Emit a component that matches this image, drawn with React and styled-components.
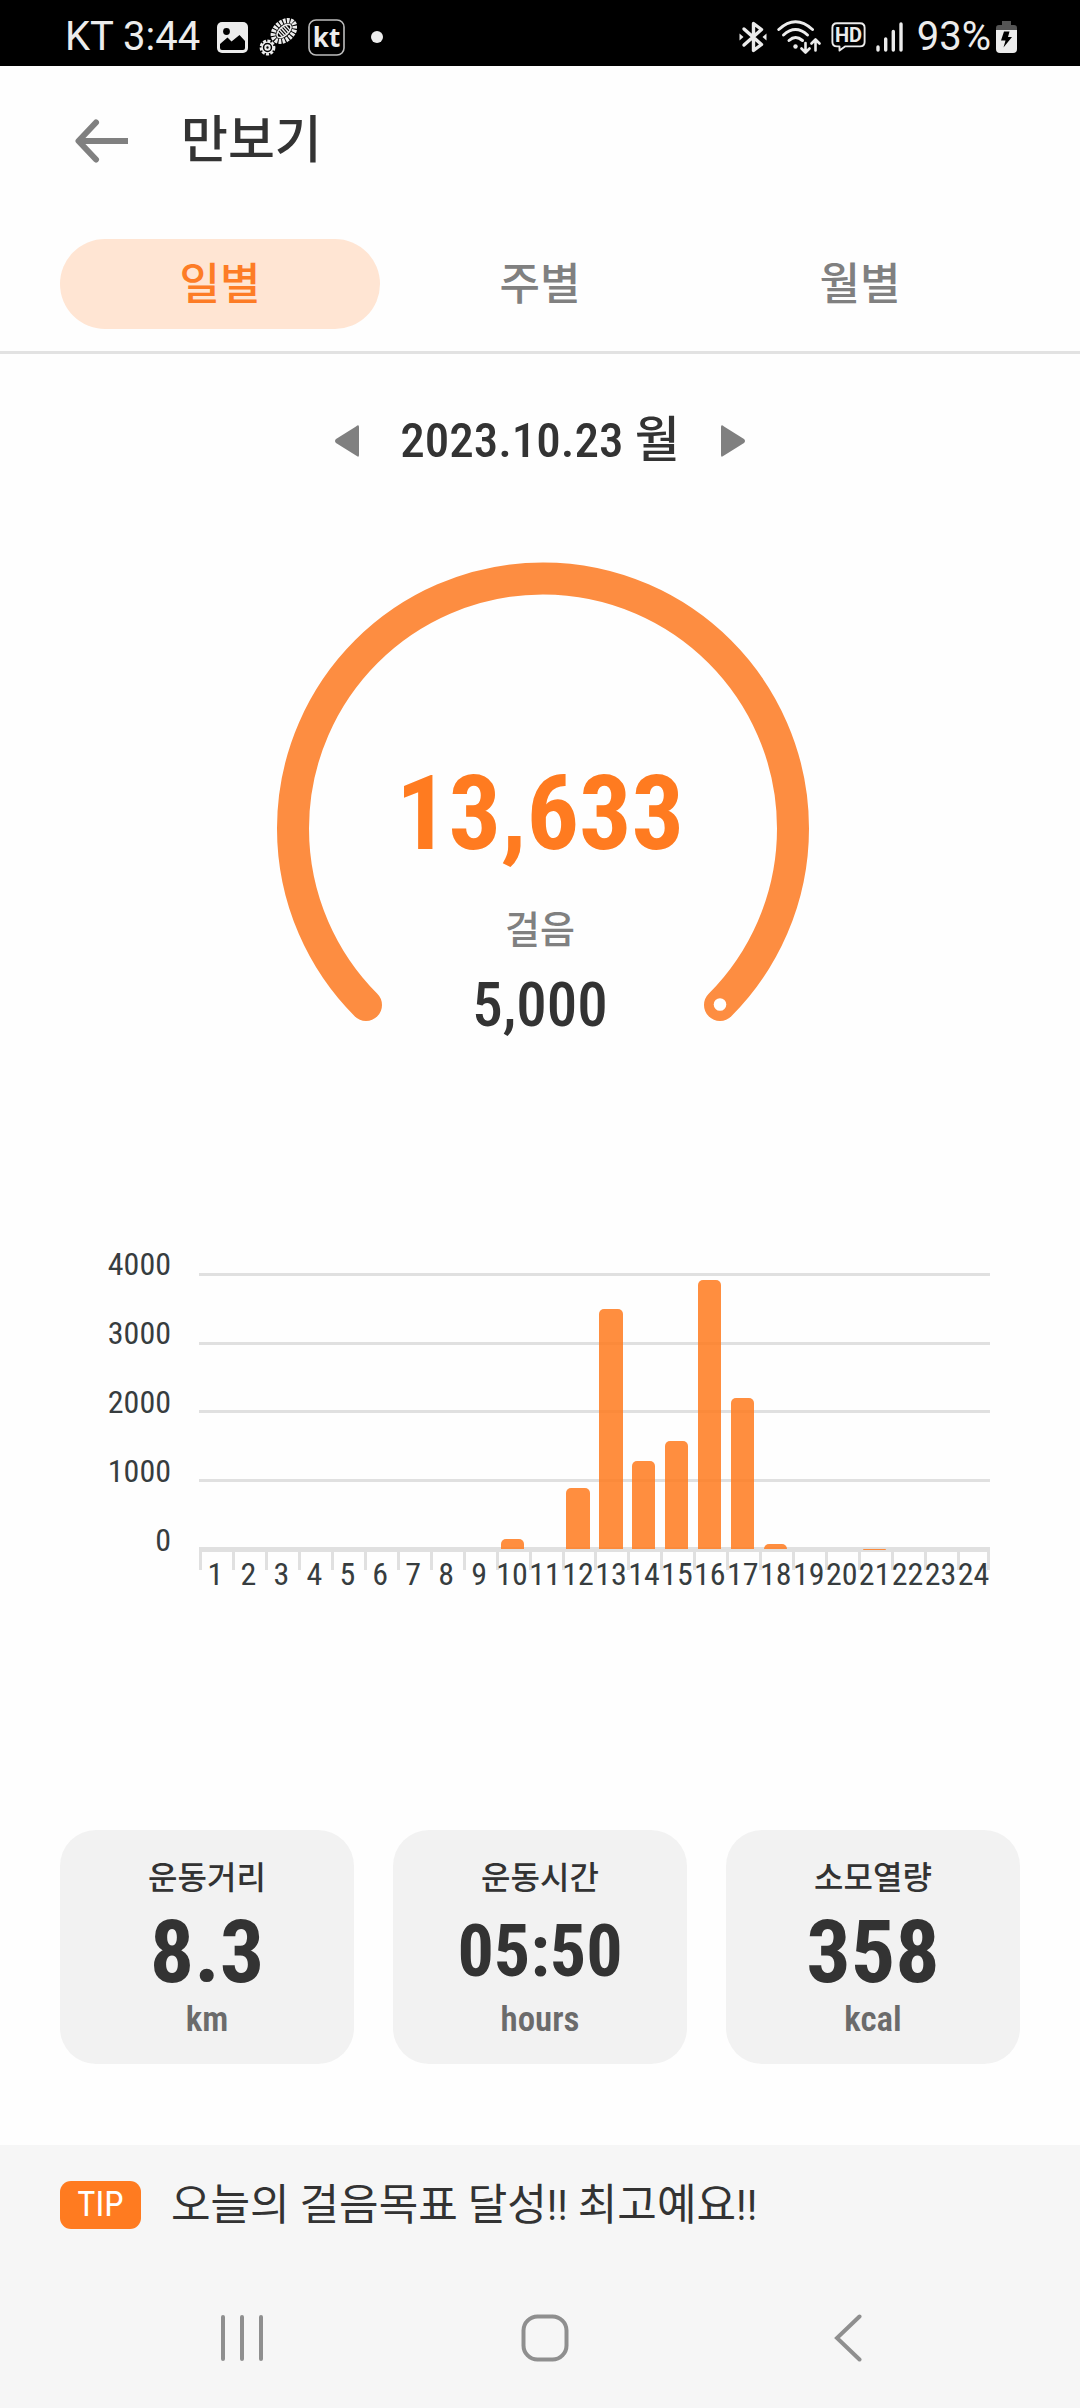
import React, { useState } from "react";
import styled, { createGlobalStyle } from "styled-components";

const tabs = ["일별", "주별", "월별"];

const maxSteps = 4000;
const scale = [4000, 3000, 2000, 1000, 0];
const hourly = [
  0, 0, 0, 0, 0, 0, 0, 0, 0, 151, 0, 893, 3508, 1286, 1573, 3934, 2205, 76, 0,
  0, 7, 0, 0, 0,
];

const stats = [
  { label: "운동거리", value: "8.3", unit: "km" },
  { label: "운동시간", value: "05:50", unit: "hours", small: true },
  { label: "소모열량", value: "358", unit: "kcal" },
];

const GlobalStyle = createGlobalStyle`
  * {
    box-sizing: border-box;
  }
  body {
    margin: 0;
    background: #fefefe;
    color: #333;
    font-family: "Roboto Condensed", "Noto Sans CJK KR", sans-serif;
  }
  h1, p, dl, dt, dd {
    margin: 0;
  }
  button {
    border: 0;
    padding: 0;
    background: none;
    font: inherit;
    color: inherit;
    cursor: pointer;
  }
  svg {
    display: block;
  }
`;

const Page = styled.div`
  min-height: 100vh;
  display: flex;
  flex-direction: column;
`;

const StatusBar = styled.div`
  height: 66px;
  padding: 8px 63px 0 65px;
  display: flex;
  justify-content: space-between;
  background: #000;
  color: #ececec;
  font-family: Roboto, sans-serif;
  font-size: 40px;
  line-height: 58px;
`;

const StatusGroup = styled.div`
  display: flex;
  align-items: center;
  gap: ${(props) => props.$gap};
`;

const Header = styled.header`
  height: 150px;
  padding: 0 75px;
  display: flex;
  align-items: center;
  gap: 52px;
  h1 {
    font-size: 51px;
    font-weight: 500;
    line-height: 60px;
  }
`;

const TabBar = styled.nav`
  display: flex;
  padding: 23px 60px 22px;
  border-bottom: 3px solid #e2e2e2;
`;

const Tab = styled.button`
  flex: 1;
  height: 90px;
  border-radius: 45px;
  font-size: 44px;
  font-weight: 500;
  line-height: 92px;
  background: ${(props) => (props.$active ? "#ffe5d3" : "transparent")};
  color: ${(props) => (props.$active ? "#fd7c26" : "#808080")};
`;

const DateRow = styled.div`
  height: 174px;
  display: flex;
  align-items: center;
  justify-content: center;
  gap: 40px;
  font-size: 49px;
  font-weight: 500;
  line-height: 60px;
`;

const Gauge = styled.section`
  margin-top: 34px;
  display: grid;
  justify-items: center;
  > * {
    grid-area: 1 / 1;
  }
`;

const GaugeText = styled.div`
  padding-top: 202px;
  text-align: center;
`;

const Steps = styled.p`
  color: #ff7b20;
  font-size: 104px;
  font-weight: 700;
  line-height: 100px;
`;

const StepsLabel = styled.p`
  margin-top: 42px;
  color: #808080;
  font-size: 38px;
  font-weight: 500;
  line-height: 48px;
`;

const Goal = styled.p`
  margin-top: 19px;
  font-size: 61px;
  font-weight: 500;
  line-height: 64px;
`;

const Chart = styled.section`
  margin-top: 211px;
  padding: 0 90px 0 60px;
  display: grid;
  grid-template-columns: 111px 1fr;
  column-gap: 28px;
  color: #373d3f;
  font-size: 32px;
  line-height: 32px;
`;

const YAxis = styled.div`
  height: 308px;
  display: flex;
  flex-direction: column;
  justify-content: space-between;
  text-align: right;
`;

const Plot = styled.div`
  height: 279px;
  margin-top: 25px;
  display: grid;
  > * {
    grid-area: 1 / 1;
  }
`;

const GridLines = styled.div`
  display: flex;
  flex-direction: column;
  justify-content: space-between;
`;

const GridLine = styled.div`
  height: ${(props) => (props.$base ? "5px" : "3px")};
  background: #e0e0e0;
`;

const Bars = styled.div`
  margin: 2px 0 3px;
  display: grid;
  grid-template-columns: repeat(24, 1fr);
  align-items: end;
  justify-items: center;
`;

const Bar = styled.div`
  width: 70%;
  border-radius: 5px 5px 0 0;
  background: rgba(255, 123, 32, 0.86);
`;

const XAxis = styled.div`
  grid-column: 2;
  margin-top: -4px;
  display: grid;
  grid-template-columns: repeat(24, minmax(0, 1fr));
  background: linear-gradient(#e0e0e0, #e0e0e0) right top / 3px 18px no-repeat;
`;

const Hour = styled.span`
  padding-top: 6px;
  display: flex;
  justify-content: center;
  background: linear-gradient(#e0e0e0, #e0e0e0) left top / 3px 18px no-repeat;
`;

const Cards = styled.dl`
  margin-top: 240px;
  padding: 0 60px;
  display: flex;
  gap: 39px;
`;

const Card = styled.div`
  flex: 1;
  height: 234px;
  padding-top: 28px;
  border-radius: 36px;
  background: #f2f2f2;
  text-align: center;
  dt {
    font-size: 32px;
    font-weight: 500;
    line-height: 40px;
  }
`;

const Value = styled.dd`
  margin-top: 4px;
  font-size: ${(props) => (props.$small ? "72px" : "88px")};
  font-weight: 700;
  line-height: 100px;
`;

const Unit = styled.dd`
  color: #6b6b6b;
  font-size: 35px;
  font-weight: 600;
  line-height: 36px;
`;

const Bottom = styled.div`
  margin-top: 81px;
  flex: 1;
  background: #f6f6f6;
`;

const Tip = styled.div`
  padding: 36px 60px 39px;
  display: flex;
  align-items: center;
  gap: 30px;
  font-size: 43px;
  line-height: 48px;
`;

const Badge = styled.span`
  width: 81px;
  border-radius: 11px;
  background: #ff7b20;
  color: #fff;
  font-size: 35px;
  text-align: center;
`;

const SystemNav = styled.nav`
  height: 140px;
  padding: 0 80px 0 90px;
  display: grid;
  grid-template-columns: repeat(3, 1fr);
  justify-items: center;
  align-items: center;
`;

const PhotoIcon = () => (
  <svg width="31" height="31" viewBox="0 0 31 31">
    <rect width="31" height="31" rx="5" fill="#ececec" />
    <circle cx="9.5" cy="9.5" r="3.4" fill="#000" />
    <path
      d="M3 22 L10.5 15.5 L14.5 19.5 L22.5 13 L28 19 V26 Q28 28 26 28 H5 Q3 28 3 26 Z"
      fill="#000"
    />
  </svg>
);

const ShoeIcon = () => (
  <svg width="38" height="38" viewBox="0 0 38 38" fill="none">
    <g transform="translate(25 13) rotate(-42)" stroke="#ececec">
      <ellipse rx="12.5" ry="8.5" strokeWidth="5" strokeDasharray="2.6 1.1" />
      <ellipse rx="8.6" ry="4.4" strokeWidth="1.6" />
      <path
        d="M-5 -3V3M-2.5 -4V4M0 -4V4M2.5 -4V4M5 -3V3"
        strokeWidth="1.4"
      />
    </g>
    <g stroke="#ececec">
      <circle cx="8.5" cy="29.5" r="6.6" strokeWidth="2.6" strokeDasharray="3 1.4" />
      <circle cx="8.5" cy="29.5" r="5.4" strokeWidth="1.4" />
      <circle cx="8.5" cy="29.5" r="2.2" strokeWidth="2" />
    </g>
  </svg>
);

const KtIcon = () => (
  <svg width="37" height="37" viewBox="0 0 37 37">
    <rect
      x="1"
      y="1"
      width="35"
      height="35"
      rx="7"
      fill="none"
      stroke="#bdbdbd"
      strokeWidth="1.6"
    />
    <text
      x="18.5"
      y="28"
      textAnchor="middle"
      fontFamily="Open Sans, sans-serif"
      fontSize="26"
      fontWeight="700"
      fill="#ececec"
    >
      kt
    </text>
  </svg>
);

const BluetoothIcon = () => (
  <svg
    width="28"
    height="32"
    viewBox="0 0 28 32"
    fill="none"
    stroke="#ececec"
    strokeWidth="3.4"
    strokeLinejoin="round"
    strokeLinecap="round"
  >
    <path d="M5 8 L22.5 23.5 L14.5 29.5 V2.5 L22.5 8.5 L5 24" />
    <path d="M0.5 12.5 L4.5 16 L0.5 19.5 Z" fill="#ececec" stroke="none" />
    <path d="M27.5 12.5 L23.5 16 L27.5 19.5 Z" fill="#ececec" stroke="none" />
  </svg>
);

const WifiIcon = () => (
  <svg
    width="44"
    height="34"
    viewBox="0 0 44 34"
    fill="none"
    stroke="#ececec"
    strokeWidth="3"
    strokeLinecap="round"
    strokeLinejoin="round"
  >
    <path d="M1.8 9.5 Q18.5 -6 35.5 9.5" />
    <path d="M6.5 15 Q18.5 4 30.5 15" />
    <path d="M12 20.5 Q18.5 14.5 25.5 20.5" />
    <circle cx="18.5" cy="26.5" r="2.2" fill="#ececec" stroke="none" />
    <path d="M28.5 23V32M24.5 28.5L28.5 32.5L32.5 28.5" strokeWidth="2.6" />
    <path d="M38.5 30.5V20M34.5 23.5L38.5 19.5L42.5 23.5" strokeWidth="2.6" />
  </svg>
);

const HdIcon = () => (
  <svg width="35" height="30" viewBox="0 0 35 30">
    <path
      d="M6 1.2H29Q33.6 1.2 33.6 5.8V20Q33.6 24.4 29 24.4H14L8.5 28.6V24.4H6Q1.4 24.4 1.4 20V5.8Q1.4 1.2 6 1.2Z"
      fill="none"
      stroke="#ececec"
      strokeWidth="1.9"
      strokeLinejoin="round"
    />
    <text
      x="17.5"
      y="20"
      textAnchor="middle"
      fontFamily="Roboto, sans-serif"
      fontSize="20"
      fontWeight="700"
      fill="#ececec"
    >
      HD
    </text>
  </svg>
);

const SignalIcon = () => (
  <svg
    width="27"
    height="30"
    viewBox="0 0 27 30"
    stroke="#ececec"
    strokeWidth="3.4"
    strokeLinecap="round"
  >
    <path d="M2 25V28M9.7 17V28M17.3 9.5V28M25 2V28" />
  </svg>
);

const BatteryIcon = () => (
  <svg width="21" height="32" viewBox="0 0 21 32">
    <path d="M6 0H15V4H18Q21 4 21 7V9H0V7Q0 4 3 4H6Z" fill="#555" />
    <path d="M0 9H21V28Q21 32 17 32H4Q0 32 0 28Z" fill="#ececec" />
    <path d="M8 10.5H13.5L12 16H16L7.5 26.5L9.5 19.5H5Z" fill="#000" />
  </svg>
);

const BackArrow = () => (
  <svg
    width="54"
    height="44"
    viewBox="0 0 54 44"
    fill="none"
    stroke="#808080"
    strokeWidth="6"
    strokeLinejoin="round"
  >
    <path d="M21 3.5 L3.5 22 L21 40.5" strokeLinecap="round" />
    <path d="M5 22H53" />
  </svg>
);

const Triangle = ({ flip }) => (
  <svg width="26" height="32" viewBox="0 0 26 32">
    <path
      d={
        flip
          ? "M1 2 Q1 -1 4 1.5 L24 14 Q26 16 24 18 L4 30.5 Q1 33 1 30 Z"
          : "M25 2 Q25 -1 22 1.5 L2 14 Q0 16 2 18 L22 30.5 Q25 33 25 30 Z"
      }
      fill="#808080"
    />
  </svg>
);

const GaugeArc = () => (
  <svg width="540" height="466" viewBox="0 0 540 466">
    <path
      d="M96 443 A250 250 0 1 1 450 443"
      fill="none"
      stroke="#fd8d41"
      strokeWidth="32"
      strokeLinecap="round"
    />
    <circle cx="450" cy="442.5" r="6.3" fill="#fff" />
  </svg>
);

function App() {
  const [activeTab, setActiveTab] = useState(tabs[0]);
  return (
    <Page>
      <GlobalStyle />
      <StatusBar>
        <StatusGroup $gap="17px">
          <span>KT 3:44</span>
          <StatusGroup $gap="11px">
            <PhotoIcon />
            <ShoeIcon />
            <KtIcon />
            <svg width="64" height="12" viewBox="0 0 64 12">
              <circle cx="21" cy="6" r="6" fill="#ececec" />
            </svg>
          </StatusGroup>
        </StatusGroup>
        <StatusGroup $gap="14px">
          <StatusGroup $gap="10px">
            <BluetoothIcon />
            <WifiIcon />
            <HdIcon />
            <SignalIcon />
          </StatusGroup>
          <StatusGroup $gap="5px">
            <span>93%</span>
            <BatteryIcon />
          </StatusGroup>
        </StatusGroup>
      </StatusBar>
      <Header>
        <button type="button" aria-label="뒤로">
          <BackArrow />
        </button>
        <h1>만보기</h1>
      </Header>
      <TabBar>
        {tabs.map((tab) => (
          <Tab
            key={tab}
            type="button"
            $active={tab === activeTab}
            onClick={() => setActiveTab(tab)}
          >
            {tab}
          </Tab>
        ))}
      </TabBar>
      <DateRow>
        <button type="button" aria-label="이전">
          <Triangle />
        </button>
        <time dateTime="2023-10-23">2023.10.23 월</time>
        <button type="button" aria-label="다음">
          <Triangle flip />
        </button>
      </DateRow>
      <Gauge>
        <GaugeArc />
        <GaugeText>
          <Steps>13,633</Steps>
          <StepsLabel>걸음</StepsLabel>
          <Goal>5,000</Goal>
        </GaugeText>
      </Gauge>
      <Chart>
        <YAxis>
          {scale.map((value) => (
            <span key={value}>{value}</span>
          ))}
        </YAxis>
        <Plot>
          <GridLines>
            {scale.map((value) => (
              <GridLine key={value} $base={value === 0} />
            ))}
          </GridLines>
          <Bars>
            {hourly.map((steps, i) => (
              <Bar key={i} style={{ height: `${(steps / maxSteps) * 100}%` }} />
            ))}
          </Bars>
        </Plot>
        <XAxis>
          {hourly.map((steps, i) => (
            <Hour key={i}>{i + 1}</Hour>
          ))}
        </XAxis>
      </Chart>
      <Cards>
        {stats.map(({ label, value, unit, small }) => (
          <Card key={label}>
            <dt>{label}</dt>
            <Value $small={small}>{value}</Value>
            <Unit>{unit}</Unit>
          </Card>
        ))}
      </Cards>
      <Bottom>
        <Tip>
          <Badge>TIP</Badge>
          <p>오늘의 걸음목표 달성!! 최고예요!!</p>
        </Tip>
        <SystemNav>
          <button type="button" aria-label="최근 앱">
            <svg
              width="44"
              height="48"
              viewBox="0 0 44 48"
              stroke="#8f8f8f"
              strokeWidth="4"
              strokeLinecap="round"
            >
              <path d="M3 3V45M22 3V45M41 3V45" />
            </svg>
          </button>
          <button type="button" aria-label="홈">
            <svg width="48" height="48" viewBox="0 0 48 48">
              <rect
                x="2.5"
                y="2.5"
                width="43"
                height="43"
                rx="14"
                fill="none"
                stroke="#8f8f8f"
                strokeWidth="4"
              />
            </svg>
          </button>
          <button type="button" aria-label="뒤로 가기">
            <svg
              width="28"
              height="48"
              viewBox="0 0 28 48"
              fill="none"
              stroke="#8f8f8f"
              strokeWidth="4"
              strokeLinecap="round"
            >
              <path d="M25.5 2.5L3 24L25.5 45.5" />
            </svg>
          </button>
        </SystemNav>
      </Bottom>
    </Page>
  );
}

export default App;
